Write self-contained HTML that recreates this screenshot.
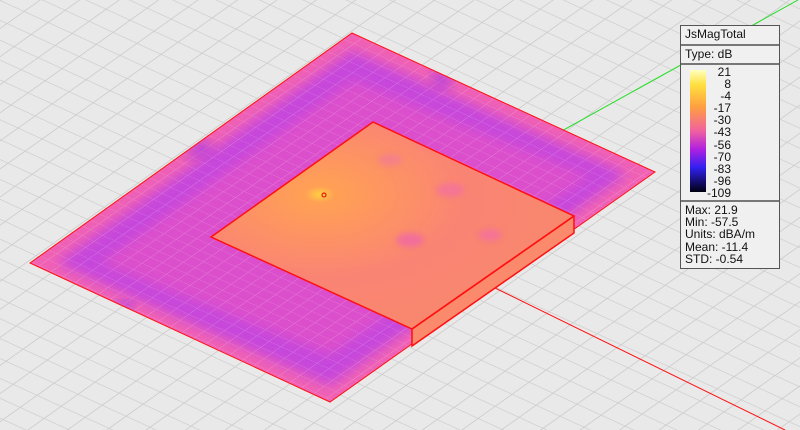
<!DOCTYPE html>
<html><head><style>
body{margin:0;width:800px;height:430px;overflow:hidden;background:#e9e9e9;font-family:"Liberation Sans",sans-serif}
#lg{position:absolute;left:680px;top:25px;width:98px;height:242px;background:#f0f0f0;border:1px solid #555;font-size:12px;color:#111}
.r{border-bottom:2px solid #777;padding:1px 4px}
</style></head><body>
<svg width="800" height="430" style="position:absolute;left:0;top:0">
<defs>
<pattern id="g" width="100" height="100" patternUnits="userSpaceOnUse" patternTransform="matrix(0.24,0.11,-0.17,0.121,0,0)">
<path d="M0 0H100M0 0V100" stroke="#cbcbcb" stroke-width="7" fill="none"/>
</pattern>
<pattern id="g2" width="100" height="100" patternUnits="userSpaceOnUse" patternTransform="matrix(0.12,0.055,-0.085,0.06,0,0)">
<path d="M0 0H100M0 0V100" stroke="rgba(255,255,255,0.4)" stroke-width="8" fill="none" stroke-dasharray="10 6"/>
</pattern>
<radialGradient id="p" cx="0.3" cy="0.35" r="0.8">
<stop offset="0" stop-color="#ffd040"/><stop offset="0.05" stop-color="#ffa055"/><stop offset="0.5" stop-color="#fa8474"/><stop offset="1" stop-color="#f8886a"/>
</radialGradient>
<filter id="bl"><feGaussianBlur stdDeviation="6"/></filter>
<filter id="bl2"><feGaussianBlur stdDeviation="3"/></filter>
<clipPath id="cb"><polygon points="352,33 655,172 330,402 30,263"/></clipPath>
<clipPath id="cp"><polygon points="373,122 574,216 412,329 211,237"/></clipPath>
</defs>
<rect width="800" height="430" fill="#e9e9e9"/>
<rect width="800" height="430" fill="url(#g)"/>
<line x1="495" y1="168" x2="798" y2="0" stroke="#22dd22" stroke-width="1"/>
<g clip-path="url(#cb)">
<polygon points="352,33 655,172 330,402 30,263" fill="#f062b4"/>
<polygon points="352,50 628,174 330,386 56,263" fill="#c646dc" filter="url(#bl)"/>
<polygon points="352,80 590,176 330,355 100,263" fill="#dc50cc" filter="url(#bl)"/>
<polygon points="352,33 655,172 330,402 30,263" fill="url(#g2)"/>
<polygon points="200,140 215,150 185,160" fill="#9a30f0" opacity="0.8" filter="url(#bl)"/>
<polygon points="430,70 455,80 440,90" fill="#9a30f0" opacity="0.8" filter="url(#bl)"/>
<polygon points="115,300 135,305 125,312" fill="#8a30ff" opacity="0.9" filter="url(#bl)"/>
</g>
<polygon points="352,33 655,172 330,402 30,263" fill="none" stroke="#ff1010" stroke-width="1"/>
<polygon points="373,122 574,216 412,329 211,237" fill="url(#p)"/>
<g opacity="0.45" clip-path="url(#cp)">
<g filter="url(#bl2)">
<ellipse cx="410" cy="240" rx="14" ry="7" fill="#e850d0"/>
<ellipse cx="450" cy="190" rx="14" ry="7" fill="#f060c0"/>
<ellipse cx="390" cy="160" rx="12" ry="6" fill="#f070b0"/>
<ellipse cx="490" cy="235" rx="12" ry="6" fill="#f060c0"/>
<ellipse cx="430" cy="140" rx="14" ry="7" fill="#f070b0"/>
</g>
</g>
<polygon points="574,216 574,233 412,346 412,329" fill="#fb8a6c"/>
<polygon points="373,122 574,216 412,329 211,237" fill="none" stroke="#ff1010" stroke-width="1.5"/>
<path d="M574 216V233L412 346V329M412 329L574 216" fill="none" stroke="#ff1010" stroke-width="1.5"/>
<line x1="495" y1="288" x2="785" y2="430" stroke="#ff1010" stroke-width="1"/>
<circle cx="324" cy="195" r="2" fill="none" stroke="#d00" stroke-width="1"/>
</svg>
<div id="lg">
<div class="r" style="height:16px">JsMagTotal</div>
<div class="r" style="height:15px">Type: dB</div>
<div style="position:relative;height:135px;border-bottom:2px solid #777">
<div style="position:absolute;left:9px;top:5px;width:16px;height:122px;background:linear-gradient(#ffffc0,#ffe040 12%,#ffa040 30%,#f060a0 50%,#b020e0 65%,#3020f0 80%,#000010)"></div>
<div style="position:absolute;left:18px;top:1px;width:32px;text-align:right;line-height:12.1px">21<br>8<br>-4<br>-17<br>-30<br>-43<br>-56<br>-70<br>-83<br>-96<br>-109</div>
</div>
<div style="padding:2px 4px;line-height:12.2px">Max: 21.9<br>Min: -57.5<br>Units: dBA/m<br>Mean: -11.4<br>STD: -0.54</div>
</div>
</body></html>
